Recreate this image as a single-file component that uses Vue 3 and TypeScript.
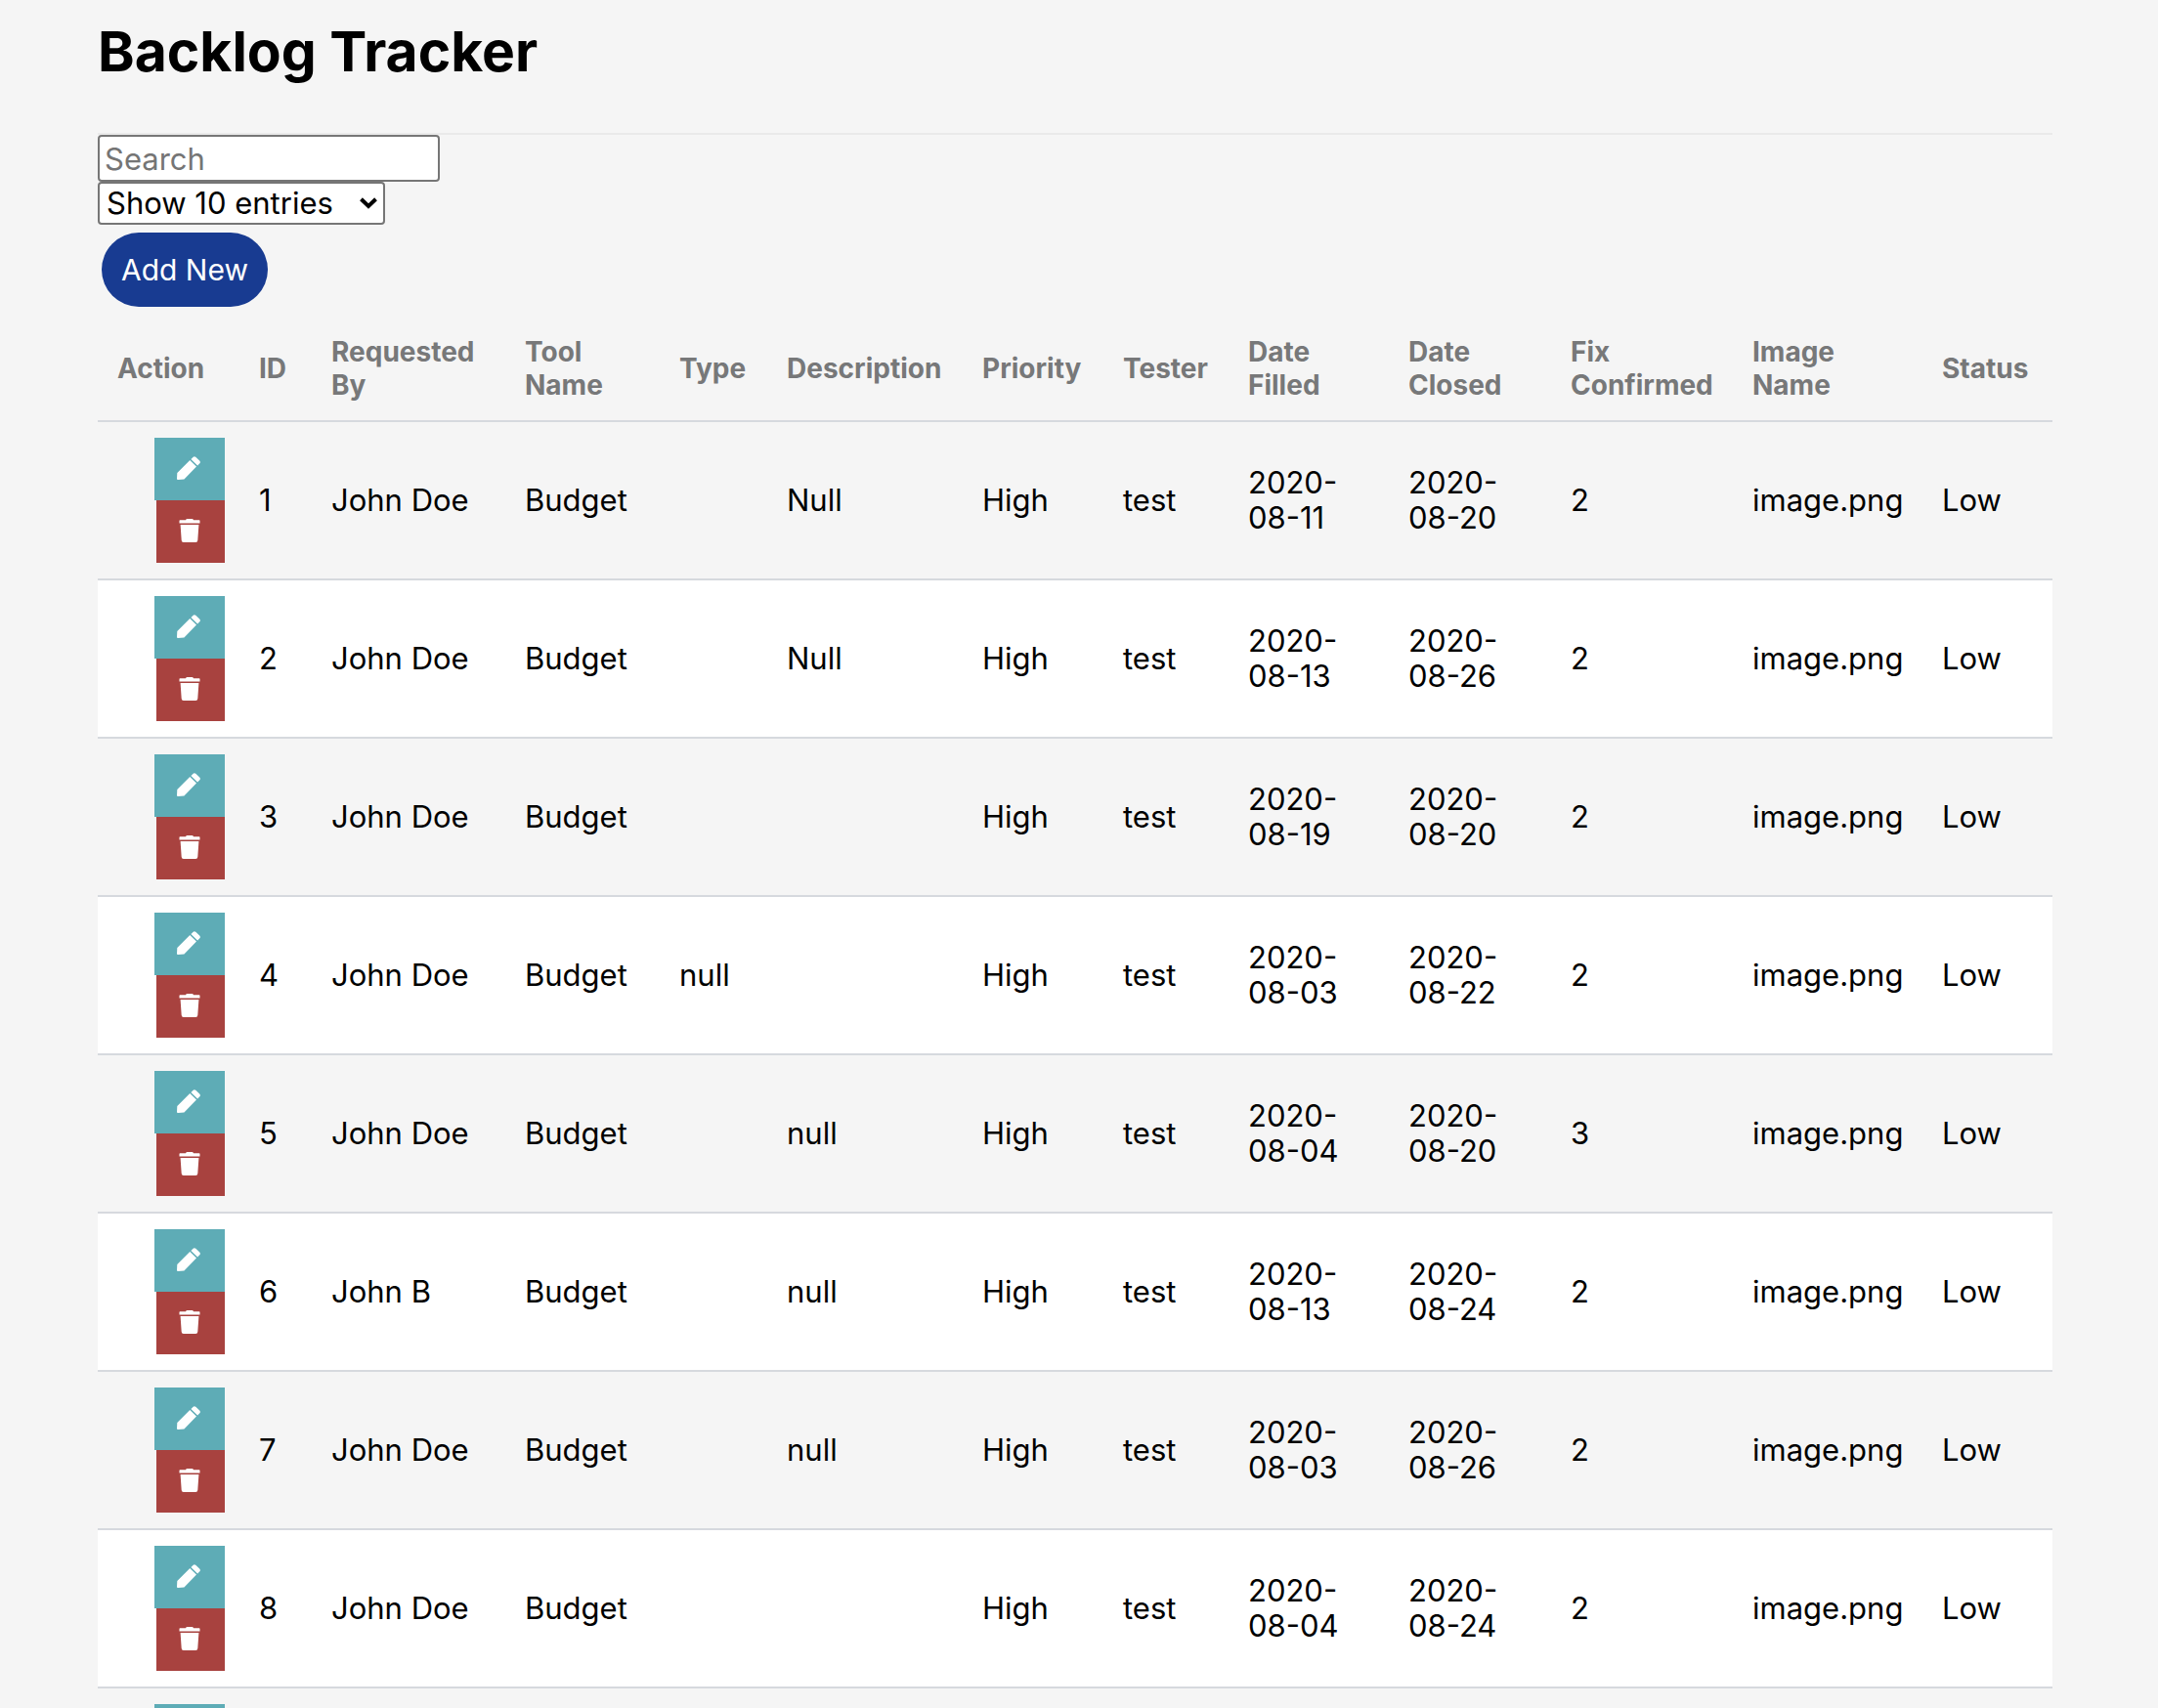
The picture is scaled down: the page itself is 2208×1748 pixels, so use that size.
<script setup lang="ts">
import { computed, ref } from 'vue'

interface BacklogItem {
  key: number
  id?: number
  requestedBy?: string
  tool?: string
  type?: string
  description?: string
  priority?: string
  tester?: string
  filled?: string
  closed?: string
  fix?: number
  image?: string
  status?: string
}

const columns: { key: string; label: string }[] = [
  { key: 'action', label: 'Action' },
  { key: 'id', label: 'ID' },
  { key: 'requested', label: 'Requested By' },
  { key: 'tool', label: 'Tool Name' },
  { key: 'type', label: 'Type' },
  { key: 'description', label: 'Description' },
  { key: 'priority', label: 'Priority' },
  { key: 'tester', label: 'Tester' },
  { key: 'filled', label: 'Date Filled' },
  { key: 'closed', label: 'Date Closed' },
  { key: 'fix', label: 'Fix Confirmed' },
  { key: 'image', label: 'Image Name' },
  { key: 'status', label: 'Status' },
]

function item(
  id: number,
  requestedBy: string,
  type: string,
  description: string,
  filled: string,
  closed: string,
  fix = 2,
): BacklogItem {
  return {
    key: id, id, requestedBy, type, description, filled, closed, fix,
    tool: 'Budget', priority: 'High', tester: 'test', image: 'image.png', status: 'Low',
  }
}

const items: BacklogItem[] = [
  item(1, 'John Doe', '', 'Null', '2020-08-11', '2020-08-20'),
  item(2, 'John Doe', '', 'Null', '2020-08-13', '2020-08-26'),
  item(3, 'John Doe', '', '', '2020-08-19', '2020-08-20'),
  item(4, 'John Doe', 'null', '', '2020-08-03', '2020-08-22'),
  item(5, 'John Doe', '', 'null', '2020-08-04', '2020-08-20', 3),
  item(6, 'John B', '', 'null', '2020-08-13', '2020-08-24'),
  item(7, 'John Doe', '', 'null', '2020-08-03', '2020-08-26'),
  item(8, 'John Doe', '', '', '2020-08-04', '2020-08-24'),
  // An entry that has not been filled in yet
  { key: 9 },
]

const search = ref('')
const pageSize = ref(10)

const visibleItems = computed(() => {
  const term = search.value.trim().toLowerCase()
  return items
    .filter((row) => !term || Object.values(row).join(' ').toLowerCase().includes(term))
    .slice(0, pageSize.value)
})
</script>

<template>
  <main class="page">
    <h1 class="title">Backlog Tracker</h1>
    <div class="toolbar">
      <input v-model="search" class="search" type="text" placeholder="Search" aria-label="Search" />
      <div class="entries">
        <select v-model="pageSize" class="entries-select" aria-label="Entries per page">
          <option :value="10">Show 10 entries</option>
        </select>
        <svg class="entries-arrow" viewBox="0 0 18 12" aria-hidden="true">
          <path d="M1.5 1.8 9 9l7.5-7.2" fill="none" stroke="#000" stroke-width="4" />
        </svg>
      </div>
      <button class="add" type="button">Add New</button>
    </div>
    <table class="table">
      <colgroup>
        <col v-for="col in columns" :key="col.key" :class="'col-' + col.key" />
      </colgroup>
      <thead>
        <tr>
          <th v-for="col in columns" :key="col.key" scope="col">{{ col.label }}</th>
        </tr>
      </thead>
      <tbody>
        <tr v-for="row in visibleItems" :key="row.key">
          <td>
            <div class="actions">
              <button class="edit" type="button" aria-label="Edit">
                <svg class="icon" viewBox="0 0 24 24" aria-hidden="true">
                  <path d="M13.3 4 20 10.6 7.4 23.4 1 24Q0 24 0 23L.3 17ZM14.4 2.9 16.4.9Q17.8-.3 19.3.8L23.2 4.6Q24.5 5.9 23.3 7.3L21.1 9.5Z" fill="#fff" />
                </svg>
              </button>
              <button class="delete" type="button" aria-label="Delete">
                <svg class="icon" viewBox="0 0 24 24" aria-hidden="true">
                  <path d="M1.5 2Q1.5 1.3 2.2 1.3H8Q8.5 0 9.5 0H14.5Q15.5 0 16 1.3H21.8Q22.5 1.3 22.5 2V4.5H1.5ZM2.6 6H21.4L20.3 22Q20.2 24 18.2 24H5.8Q3.8 24 3.7 22Z" fill="#fff" />
                </svg>
              </button>
            </div>
          </td>
          <td>{{ row.id }}</td>
          <td>{{ row.requestedBy }}</td>
          <td>{{ row.tool }}</td>
          <td>{{ row.type }}</td>
          <td>{{ row.description }}</td>
          <td>{{ row.priority }}</td>
          <td>{{ row.tester }}</td>
          <td>{{ row.filled }}</td>
          <td>{{ row.closed }}</td>
          <td>{{ row.fix }}</td>
          <td>{{ row.image }}</td>
          <td>{{ row.status }}</td>
        </tr>
      </tbody>
    </table>
  </main>
</template>

<style>
body {
  background: #f5f5f5;
}
</style>

<style scoped>
.page {
  box-sizing: border-box;
  height: 100vh;
  padding: 18px 108px 0 100px;
  overflow-y: auto;
  scrollbar-width: none;
  color: #000;
  font-family: Inter, "Liberation Sans", sans-serif;
  font-size: 31px;
  line-height: 36px;
}

button,
input,
select {
  font: inherit;
}

.title {
  margin: 0 0 48px;
  font-size: 57px;
  font-weight: 700;
  line-height: 70px;
}

.toolbar {
  display: flex;
  flex-direction: column;
  align-items: flex-start;
  border-top: 2px solid #eaeaea;
}

.search {
  box-sizing: border-box;
  width: 350px;
  height: 48px;
  padding: 0 5px;
  border: 2px solid #767676;
  border-radius: 4px;
  background: #fff;
}

.search::placeholder {
  color: #757575;
}

.entries {
  display: grid;
  align-items: center;
}

.entries-select {
  grid-area: 1 / 1;
  box-sizing: border-box;
  width: 294px;
  height: 44px;
  padding: 0 7px;
  border: 2px solid #767676;
  border-radius: 4px;
  appearance: none;
  background: #fff;
  color: #000;
}

.entries-arrow {
  grid-area: 1 / 1;
  justify-self: end;
  width: 18px;
  height: 12px;
  margin-right: 8px;
  pointer-events: none;
}

.add {
  height: 76px;
  margin: 8px 4px;
  padding: 0 20px;
  border: 0;
  border-radius: 38px;
  background: #183b91;
  color: #fff;
  font-size: 30px;
}

.table {
  width: 100%;
  border-collapse: separate;
  border-spacing: 0;
  table-layout: fixed;
}

.col-action { width: 7.25%; }
.col-id { width: 3.7%; }
.col-requested { width: 9.9%; }
.col-tool { width: 7.9%; }
.col-type { width: 5.5%; }
.col-description { width: 10%; }
.col-priority { width: 7.2%; }
.col-tester { width: 6.4%; }
.col-filled { width: 8.2%; }
.col-closed { width: 8.3%; }
.col-fix { width: 9.3%; }
.col-image { width: 9.7%; }

.table th,
.table td {
  border-bottom: 2px solid #d6d9de;
  text-align: left;
  vertical-align: middle;
}

.table th {
  padding: 21px 15px 19px 20px;
  color: #777879;
  font-size: 28px;
  font-weight: 700;
  line-height: 34px;
}

.table td {
  padding: 16px 15px 16px 20px;
}

.table tbody tr:nth-child(even) {
  background: #fff;
}

.actions {
  display: flex;
  flex-direction: column;
  align-items: flex-end;
}

.edit,
.delete {
  display: flex;
  align-items: center;
  justify-content: center;
  height: 64px;
  padding: 0 2px 2px 0;
  border: 0;
}

.edit {
  width: 72px;
  background: #5eacb6;
}

.delete {
  width: 70px;
  background: #a8423f;
}

.icon {
  width: 24px;
  height: 24px;
}
</style>
